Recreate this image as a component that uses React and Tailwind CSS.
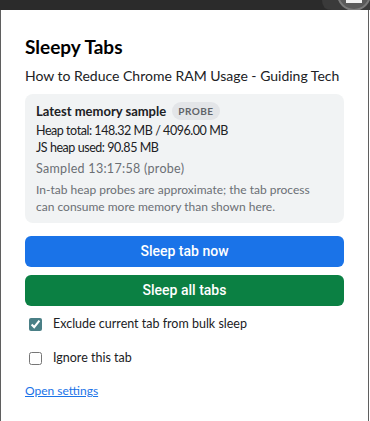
import { useState } from 'react';

const TopStrip = () => (
  <div className="h-[10px] w-full bg-[#2b2b2b]">
    <svg width="370" height="10" viewBox="0 0 370 10" className="block">
      <path d="M322 0 H370 V10 H332 Q322 10 322 0 Z" fill="#3a3a3a" />
      <circle cx="354" cy="-6" r="16" fill="#5a5a5a" stroke="#7a7a7a" strokeWidth="2" />
      <rect x="346" y="0" width="16" height="3" fill="#f2f2f2" />
    </svg>
  </div>
);

const Check = ({ checked, onChange, label }) => (
  <label className="flex items-center gap-[11px] pl-[4px] text-[12.5px] text-[#202124]">
    <input
      type="checkbox"
      checked={checked}
      onChange={onChange}
      className="m-0 h-[13px] w-[13px] accent-[#4a7f86]"
    />
    <span>{label}</span>
  </label>
);

export default function App() {
  const [exclude, setExclude] = useState(true);
  const [ignore, setIgnore] = useState(false);

  return (
    <div className="h-[421px] w-[370px] bg-white font-['Lato',sans-serif]">
      <TopStrip />
      <div className="h-[411px] w-[369px] border-x border-[#5f5f5f] px-[24px] pt-[25px]">
        <h1 className="text-[19px] font-bold leading-[24px] text-black">Sleepy Tabs</h1>
        <p className="mt-[7px] whitespace-nowrap text-[14px] leading-[20px] text-[#202124]">
          How to Reduce Chrome RAM Usage - Guiding Tech
        </p>

        <div className="mt-[8px] rounded-[8px] bg-[#f1f3f4] px-[11px] pb-[8px] pt-[8px]">
          <div className="flex h-[18px] items-center gap-[6px]">
            <span className="text-[13px] font-bold leading-[18px] text-[#202124]">
              Latest memory sample
            </span>
            <span className="rounded-full bg-[#e3e5e8] px-[6px] text-[10px] font-bold leading-[18px] tracking-[0.05em] text-[#5f6368]">
              PROBE
            </span>
          </div>
          <div className="mt-[2px] text-[12.5px] leading-[17px] tracking-[-0.45px] text-[#202124]">
            <div>Heap total: 148.32 MB / 4096.00 MB</div>
            <div>JS heap used: 90.85 MB</div>
          </div>
          <div className="mt-[4px] text-[12.5px] leading-[17px] tracking-[0.3px] text-[#6b6f74]">
            Sampled 13:17:58 (probe)
          </div>
          <p className="mt-[4px] text-[12px] leading-[17px] text-[#6b6f74]">
            In-tab heap probes are approximate; the tab process
            <br />
            can consume more memory than shown here.
          </p>
        </div>

        <div className="mt-[13px] flex flex-col gap-[8px] font-['Roboto',sans-serif]">
          <button className="h-[31px] w-full rounded-[6px] bg-[#1a73e8] text-[14px] font-medium text-white">
            Sleep tab now
          </button>
          <button className="h-[31px] w-full rounded-[6px] bg-[#0b8043] text-[14px] font-medium text-white">
            Sleep all tabs
          </button>
        </div>

        <div className="mt-[9px] flex flex-col gap-[16px]">
          <div className="flex h-[18px] items-center">
            <Check checked={exclude} onChange={() => setExclude(!exclude)} label="Exclude current tab from bulk sleep" />
          </div>
          <div className="flex h-[18px] items-center">
            <Check checked={ignore} onChange={() => setIgnore(!ignore)} label="Ignore this tab" />
          </div>
        </div>

        <a href="#" className="mt-[15px] inline-block text-[12px] leading-[18px] text-[#1a73e8] underline">
          Open settings
        </a>
      </div>
    </div>
  );
}
